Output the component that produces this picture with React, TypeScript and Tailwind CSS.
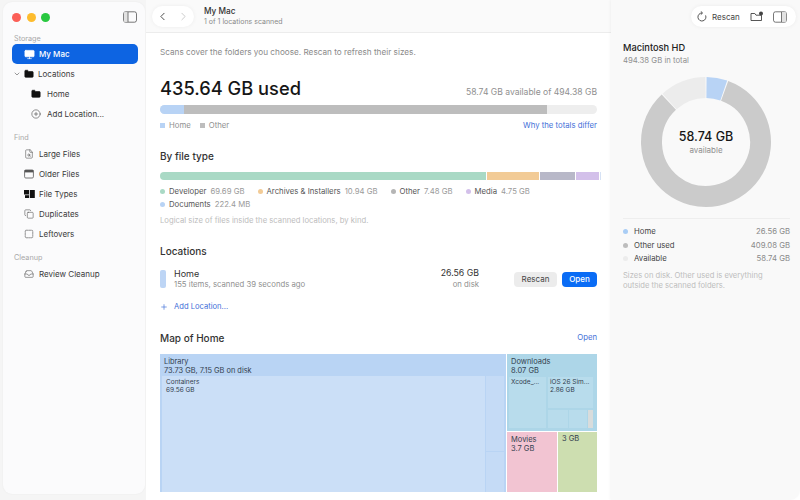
import { ChevronLeft, ChevronRight, ChevronDown, CirclePlus, Plus, Folder, Monitor, FileSearch, Copy, Square, Inbox } from "lucide-react";

function arc(startDeg: number, endDeg: number, r: number) {
  const p = (d: number) => {
    const a = ((d - 90) * Math.PI) / 180;
    return `${70 + r * Math.cos(a)} ${70 + r * Math.sin(a)}`;
  };
  return `M ${p(startDeg)} A ${r} ${r} 0 ${endDeg - startDeg > 180 ? 1 : 0} 1 ${p(endDeg)}`;
}

function SidebarToggle({ right }: { right?: boolean }) {
  return (
    <svg width="14" height="12" viewBox="0 0 14 12" fill="none" stroke="#555" strokeWidth="0.8">
      <rect x="0.5" y="0.8" width="13" height="10.4" rx="2" />
      {right ? <rect x="8.6" y="1.2" width="4.6" height="9.6" fill="#e2e2e2" stroke="none" /> : <rect x="0.9" y="1.2" width="4" height="9.6" fill="#e2e2e2" stroke="none" />}
      <path d={right ? "M8.5 1v10" : "M5 1v10"} />
    </svg>
  );
}

function FolderFill({ className }: { className: string }) {
  return <Folder className={className} fill="#111" stroke="#111" strokeWidth={1.5} />;
}

function NavRow({ label, icon, indent = "pl-[19px]", gap = "gap-[3px]" }: { label: string; icon: React.ReactNode; indent?: string; gap?: string }) {
  return (
    <div className={`flex h-5 items-center ${gap} ${indent} text-[8px] text-[#3a3a3a]`}>
      <span className="flex w-[14px] shrink-0 justify-center">{icon}</span>
      {label}
    </div>
  );
}

function SectionLabel({ children }: { children: React.ReactNode }) {
  return <div className="pl-[11px] text-[7.25px] leading-[10px] text-[#a8a8a8]">{children}</div>;
}

function Dot({ color }: { color: string }) {
  return <span className={`mr-[4px] inline-block h-[5px] w-[5px] rounded-full ${color}`} />;
}

function TypeKey({ color, name, size }: { color: string; name: string; size: string }) {
  return (
    <span className="flex items-center">
      <Dot color={color} />
      <span className="text-[#555]">{name}</span>
      <span className="ml-[4px] text-[#9a9a9a]">{size}</span>
    </span>
  );
}

export default function App() {
  return (
    <div className="flex h-[500px] w-[800px] overflow-hidden bg-white text-[#222]" style={{ fontFamily: "Inter, sans-serif" }}>
      {/* Sidebar */}
      <div className="flex w-[146px] shrink-0 bg-[#f5f5f5] pb-[6px] pl-[3px] pr-px pt-[2px]">
        <aside className="flex flex-1 flex-col rounded-[9px] bg-[#fbfbfc] shadow-[0_0_2px_rgba(0,0,0,0.05)]">
          <div className="flex h-[32px] items-center justify-between pb-[2px] pl-[9px] pr-2">
            <div className="flex gap-[5.5px]">
              <span className="h-[9px] w-[9px] rounded-full bg-[#fb5f57]" />
              <span className="h-[9px] w-[9px] rounded-full bg-[#fdbc2e]" />
              <span className="h-[9px] w-[9px] rounded-full bg-[#29c840]" />
            </div>
            <SidebarToggle />
          </div>
          <SectionLabel>Storage</SectionLabel>
          <div className="ml-[9px] mr-[7px] flex h-5 items-center gap-1 rounded-[5px] bg-[#0d64e2] pl-3 text-[8px] font-medium text-white">
            <Monitor className="h-[11px] w-[11px]" fill="#fff" stroke="#fff" strokeWidth={1.5} />
            My Mac
          </div>
          <div className="flex h-5 items-center pl-[10px] text-[8px] text-[#3a3a3a]">
            <ChevronDown className="h-[8px] w-[8px] text-[#666]" />
            <FolderFill className="ml-[3px] h-[10px] w-[10px]" />
            <span className="ml-1">Locations</span>
          </div>
          <NavRow label="Home" indent="pl-[26px]" gap="gap-1" icon={<FolderFill className="h-[10px] w-[10px]" />} />
          <NavRow label="Add Location..." indent="pl-[26px]" gap="gap-1" icon={<CirclePlus className="h-[10px] w-[10px] text-[#444]" strokeWidth={1.4} />} />
          <div className="mt-[9px]">
            <SectionLabel>Find</SectionLabel>
          </div>
          <div className="mt-px">
            <NavRow label="Large Files" icon={<FileSearch className="h-[10px] w-[10px] text-[#555]" strokeWidth={1.4} />} />
            <NavRow
              label="Older Files"
              icon={
                <svg width="10" height="10" viewBox="0 0 10 10" fill="none" stroke="#555" strokeWidth="0.8">
                  <rect x="0.6" y="1" width="8.8" height="8" rx="1.2" />
                  <rect x="0.6" y="1" width="8.8" height="2.4" fill="#555" stroke="none" />
                </svg>
              }
            />
            <NavRow
              label="File Types"
              icon={
                <svg width="11" height="8" viewBox="0 0 11 8" fill="#111">
                  <rect x="0" y="0" width="5" height="4.5" />
                  <rect x="5.8" y="0" width="5" height="8" />
                  <rect x="1" y="5.2" width="4" height="2.8" />
                </svg>
              }
            />
            <NavRow label="Duplicates" icon={<Copy className="h-[10px] w-[10px] text-[#555]" strokeWidth={1.4} />} />
            <NavRow label="Leftovers" icon={<Square className="h-[10px] w-[10px] text-[#555]" strokeWidth={1.2} strokeDasharray="3 1" />} />
          </div>
          <div className="mt-[9px]">
            <SectionLabel>Cleanup</SectionLabel>
          </div>
          <div className="mt-px">
            <NavRow label="Review Cleanup" icon={<Inbox className="h-[10px] w-[10px] text-[#555]" strokeWidth={1.4} />} />
          </div>
        </aside>
      </div>

      {/* Main column */}
      <main className="flex w-[465px] shrink-0 flex-col">
        <header className="flex h-[33px] shrink-0 items-center border-b border-[#ececec] bg-[#fafafa] pl-[6px]">
          <div className="flex h-[21px] w-[42px] items-center justify-around rounded-full bg-white shadow-[0_0_4px_rgba(0,0,0,0.06)]">
            <ChevronLeft className="h-[13px] w-[13px] text-[#333]" strokeWidth={1.6} />
            <ChevronRight className="h-[13px] w-[13px] text-[#c4c4c4]" strokeWidth={1.6} />
          </div>
          <div className="ml-[10px]">
            <div className="text-[8.25px] font-medium leading-[11px] text-[#333]">My Mac</div>
            <div className="text-[7px] leading-[10px] text-[#8a8a8a]">1 of 1 locations scanned</div>
          </div>
        </header>

        <div className="flex min-h-0 flex-1 flex-col px-[14px]">
          <p className="mt-[13px] text-[8.2px] leading-3 text-[#8a8a8a]">Scans cover the folders you choose. Rescan to refresh their sizes.</p>

          <div className="mt-[18px] flex items-end justify-between">
            <span className="text-[18.25px] font-medium leading-[24px] text-[#161616]">435.64 GB used</span>
            <span className="mb-[2px] text-[8.55px] leading-3 text-[#8f8f8f]">58.74 GB available of 494.38 GB</span>
          </div>
          <div className="mt-[5px] flex h-[9px] overflow-hidden rounded-full bg-[#eeeeee]">
            <div className="w-[24px] bg-[#b8d3f5]" />
            <div className="w-[363px] bg-[#bdbdbd]" />
          </div>
          <div className="mt-[5px] flex items-center justify-between text-[7.75px] leading-3">
            <div className="flex items-center text-[#8f8f8f]">
              <span className="mr-[4px] h-[5px] w-[5px] bg-[#b8d3f5]" />
              Home
              <span className="ml-[9px] mr-[4px] h-[5px] w-[5px] bg-[#bdbdbd]" />
              Other
            </div>
            <span className="text-[#3f6fd8]">Why the totals differ</span>
          </div>

          <h2 className="mt-[19px] text-[10px] font-medium leading-3 text-[#333]">By file type</h2>
          <div className="mt-[10px] flex h-2 w-[441px] gap-px overflow-hidden rounded-l-full">
            <div className="w-[327px] bg-[#a9d9c5]" />
            <div className="w-[52px] bg-[#f2cb96]" />
            <div className="w-[35px] bg-[#b8b8c8]" />
            <div className="w-[23px] bg-[#d3c0ea]" />
            <div className="w-[1px] bg-[#d6e2f5]" />
          </div>
          <div className="mt-[5px] flex gap-[13px] text-[7.75px] leading-[13px]">
            <TypeKey color="bg-[#a9d9c5]" name="Developer" size="69.69 GB" />
            <TypeKey color="bg-[#f2cb96]" name="Archives & Installers" size="10.94 GB" />
            <TypeKey color="bg-[#b5b5b5]" name="Other" size="7.48 GB" />
            <TypeKey color="bg-[#d3c0ea]" name="Media" size="4.75 GB" />
          </div>
          <div className="flex text-[7.75px] leading-[13px]">
            <TypeKey color="bg-[#b8d3f5]" name="Documents" size="222.4 MB" />
          </div>
          <p className="mt-[3px] text-[7.7px] leading-[13px] text-[#bdbdbd]">Logical size of files inside the scanned locations, by kind.</p>

          <h2 className="mt-[18px] text-[10px] font-medium leading-3 text-[#333]">Locations</h2>
          <div className="mt-[11px] flex items-center">
            <span className="h-[18px] w-[6px] rounded-[2px] bg-[#bdd5f5]" />
            <div className="ml-[8px] flex-1">
              <div className="text-[9px] leading-[11px] text-[#333]">Home</div>
              <div className="text-[7.75px] leading-[11px] text-[#8f8f8f]">155 items, scanned 39 seconds ago</div>
            </div>
            <div className="text-right">
              <div className="text-[8.75px] leading-[11px] text-[#333]">26.56 GB</div>
              <div className="text-[7.75px] leading-[11px] text-[#8f8f8f]">on disk</div>
            </div>
            <button className="ml-[35px] h-[15px] w-[43px] rounded-[4px] bg-[#ececec] text-[8px] text-[#444]">Rescan</button>
            <button className="ml-[5px] h-[15px] w-[35px] rounded-[4px] bg-[#0a6cf5] text-[8px] font-medium text-white">Open</button>
          </div>
          <div className="mt-[11px] flex items-center text-[7.6px] leading-[12px] text-[#3f6fd8]">
            <Plus className="mr-[6px] h-2 w-2" />
            Add Location...
          </div>
          <div className="mt-[19px] flex items-center justify-between">
            <h2 className="text-[10px] font-medium leading-3 text-[#333]">Map of Home</h2>
            <span className="text-[7.75px] text-[#3f6fd8]">Open</span>
          </div>

          {/* Treemap */}
          <div className="mt-[10px] flex h-[138px] gap-px text-[#33414f]">
            <div className="flex w-[346px] flex-col bg-[#b9d4f4]">
              <div className="h-[22px] pl-[4px] pt-[3px] text-[7.4px] leading-[9px]">
                <div>Library</div>
                <div>73.73 GB, 7.15 GB on disk</div>
              </div>
              <div className="flex min-h-0 flex-1 pl-[2px]">
                <div className="flex-1 bg-[#cbdff7] pl-[4px] pt-[2px] text-[6.5px] leading-[8px]">
                  <div>Containers</div>
                  <div>69.56 GB</div>
                </div>
                <div className="ml-[1px] flex w-[18px] flex-col gap-px">
                  <div className="h-[75px] bg-[#c5dbf6]" />
                  <div className="flex-1 bg-[#c5dbf6]" />
                </div>
                <div className="w-[2px]" />
              </div>
            </div>
            <div className="flex flex-1 flex-col gap-px">
              <div className="h-[77px] bg-[#add6e8] px-[1px]">
                <div className="h-[23px] pl-[3px] pt-[3px] text-[7.5px] leading-[9px]">
                  <div>Downloads</div>
                  <div>8.07 GB</div>
                </div>
                <div className="flex h-[51px] gap-[2px] pl-[1px]">
                  <div className="w-[37px] bg-[#b8dcec] pl-[2px] pt-[1px] text-[6.5px] leading-[8px]">Xcode_...</div>
                  <div className="flex flex-1 flex-col gap-[2px]">
                    <div className="h-[31px] bg-[#b8dcec] pl-[2px] pt-[1px] text-[6.5px] leading-[8px]">
                      <div>iOS 26 Sim...</div>
                      <div>2.86 GB</div>
                    </div>
                    <div className="flex flex-1 gap-px">
                      <div className="w-[20px] bg-[#b8dcec]" />
                      <div className="flex-1 bg-[#b8dcec]" />
                      <div className="w-[5px] bg-[#d8dcdc]" />
                    </div>
                  </div>
                  <div className="w-[1px]" />
                </div>
              </div>
              <div className="flex flex-1 gap-px">
                <div className="w-[50px] bg-[#f2c4d2] pl-[4px] pt-[3px] text-[7.5px] leading-[9px]">
                  <div>Movies</div>
                  <div>3.7 GB</div>
                </div>
                <div className="flex-1 bg-[#cddeb0] pl-[4px] pt-[2px] text-[7.5px] leading-[9px]">3 GB</div>
              </div>
            </div>
          </div>
        </div>
      </main>

      {/* Info panel */}
      <aside className="flex flex-1 flex-col rounded-br-[10px] bg-[#f9f9f9] shadow-[-1px_0_3px_rgba(0,0,0,0.04)]">
        <div className="flex justify-end pr-[4px] pt-[6px]">
          <div className="flex h-[21px] w-[105px] items-center rounded-full bg-white pl-[6px] shadow-[0_0_4px_rgba(0,0,0,0.06)]">
            <svg width="10" height="11" viewBox="0 0 10 11" fill="none" stroke="#444" strokeWidth="0.9">
              <path d="M5 2 A4 4 0 1 0 8.6 4.4" />
              <path d="M3.8 0.4 L5.6 2 L3.8 3.6" />
            </svg>
            <span className="ml-[5px] text-[8px] text-[#444]">Rescan</span>
            <svg className="ml-[10px]" width="14" height="11" viewBox="0 0 14 11" fill="none" stroke="#444" strokeWidth="0.9">
              <path d="M1 3v6.5h10.5V4.2H6L4.8 2.5H1z" />
              <circle cx="11" cy="2.5" r="2" fill="#444" stroke="none" />
            </svg>
            <span className="ml-[9px]">
              <SidebarToggle right />
            </span>
          </div>
        </div>
        <div className="mt-[15px] px-[12px]">
          <div className="text-[9.25px] font-medium leading-3 text-[#222]">Macintosh HD</div>
          <div className="text-[7.75px] leading-3 text-[#8f8f8f]">494.38 GB in total</div>
        </div>
        <div className="relative ml-[25px] mt-[6px] h-[140px] w-[140px]">
          <svg width="140" height="140" viewBox="0 0 140 140" fill="none" strokeWidth="21">
            <path d={arc(0.5, 19, 54.5)} stroke="#b8d3f5" />
            <path d={arc(20, 317, 54.5)} stroke="#cbcbcb" />
            <path d={arc(318, 359.5, 54.5)} stroke="#ececec" />
          </svg>
          <div className="absolute inset-0 flex flex-col items-center justify-center">
            <span className="text-[12.5px] font-medium leading-[15px] text-[#161616]">58.74 GB</span>
            <span className="mt-[1px] text-[8px] leading-[10px] text-[#8f8f8f]">available</span>
          </div>
        </div>
        <div className="ml-[12px] mr-[10px] mt-[6px] border-t border-[#eeeeee] pt-[6px] text-[7.75px] leading-[13.5px]">
          <div className="flex items-center justify-between">
            <span className="flex items-center text-[#444]">
              <span className="mr-[6px] h-[5px] w-[5px] rounded-full bg-[#a9cdf5]" />
              Home
            </span>
            <span className="text-[#8a8a8a]">26.56 GB</span>
          </div>
          <div className="flex items-center justify-between">
            <span className="flex items-center text-[#444]">
              <span className="mr-[6px] h-[5px] w-[5px] rounded-full bg-[#bdbdbd]" />
              Other used
            </span>
            <span className="text-[#8a8a8a]">409.08 GB</span>
          </div>
          <div className="flex items-center justify-between">
            <span className="flex items-center text-[#444]">
              <span className="mr-[6px] h-[5px] w-[5px] rounded-full bg-[#ececec]" />
              Available
            </span>
            <span className="text-[#8a8a8a]">58.74 GB</span>
          </div>
          <p className="mt-[5px] text-[7.6px] leading-[10px] text-[#bdbdbd]">Sizes on disk. Other used is everything outside the scanned folders.</p>
        </div>
      </aside>
    </div>
  );
}
